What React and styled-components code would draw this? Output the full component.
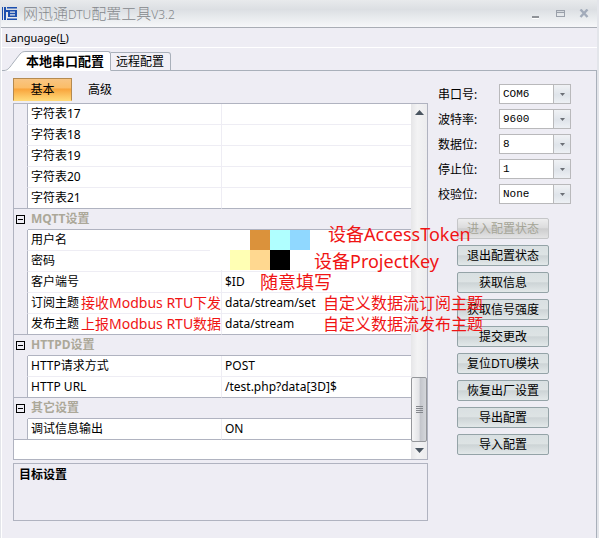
import { useState } from "react";
import styled, { createGlobalStyle } from "styled-components";

const GlobalStyle = createGlobalStyle`
  * {
    box-sizing: border-box;
  }

  body {
    margin: 0;
    background: #eeedf4;
    color: #000;
    font-family: "Noto Sans", "Noto Sans CJK SC", sans-serif;
    font-size: 12px;
    line-height: 20px;
  }

  button, select {
    font-family: inherit;
    font-size: inherit;
    color: inherit;
  }
`;

const Window = styled.div`
  display: flex;
  flex-direction: column;
  min-height: 100vh;
  padding: 0 2px 0 1px;
  background: #e3e5ea;
`;

const TitleBar = styled.header`
  display: flex;
  align-items: center;
  height: 28px;
  padding: 0 1px;
  background: linear-gradient(#e8eaec 0%, #dcdfe3 35%, #e6e9ec 60%, #f6f7f9 100%);
  border-bottom: 1px solid #a9adb5;
`;

const Title = styled.h1`
  flex: 1;
  margin: 0 0 0 5px;
  font-size: 15px;
  font-weight: 300;
  line-height: 26px;
  color: #85888c;
`;

const TitleLatin = styled.span`
  font-size: 12px;
`;

const CaptionButton = styled.button`
  display: flex;
  align-items: center;
  justify-content: center;
  width: 24px;
  height: 24px;
  padding: 0;
  border: none;
  background: none;
`;

const MenuBar = styled.nav`
  height: 20px;
  padding: 0 3px;
  background: #eeedf4;
  border-left: 1px solid #fff;
  border-bottom: 1px solid #fff;
`;

const MenuLink = styled.a`
  color: #000;
  text-decoration: none;
  font-size: 11px;
`;

const TabBar = styled.div`
  display: flex;
  align-items: flex-end;
  height: 23px;
  background: #eeedf4;
  border-left: 1px solid #fff;
`;

const TabSlope = styled.svg`
  flex: none;
  display: block;
`;

const Tab = styled.button`
  height: ${({ $active }) => ($active ? "20px" : "19px")};
  padding: ${({ $active }) => ($active ? "0 6px 0 0" : "0 6px 0 5px")};
  border: 1px solid #a9b0ba;
  border-left: none;
  border-bottom-color: ${({ $active }) => ($active ? "#fff" : "#a9b0ba")};
  border-radius: 0 3px 0 0;
  background: ${({ $active }) => ($active ? "#fff" : "#f1f0f6")};
  font-size: ${({ $active }) => ($active ? "13px" : "12px")};
  font-weight: ${({ $active }) => ($active ? "bold" : "normal")};
  line-height: 16px;
`;

const TabRule = styled.div`
  flex: 1;
  height: 1px;
  background: #a9b0ba;
`;

const Panel = styled.main`
  flex: 1;
  display: flex;
  align-items: flex-start;
  padding: 7px 0 0 11px;
  background: #eeedf4;
  border-left: 1px solid #fff;
  border-right: 1px solid #a9b0ba;
`;

const LeftColumn = styled.div`
  flex: 1;
  min-width: 0;
`;

const ModeRow = styled.div`
  display: flex;
  height: 25px;
`;

const ModeButton = styled.button`
  width: ${({ $active }) => ($active ? "59px" : "56px")};
  height: 23px;
  padding: 0;
  border: 1px solid ${({ $active }) => ($active ? "#b58a50" : "transparent")};
  border-bottom-color: ${({ $active }) => ($active ? "#ffd877" : "transparent")};
  background: ${({ $active }) =>
    $active ? "linear-gradient(#f8c583 0%, #fbbd68 42%, #f9a43c 48%, #ffd877 100%)" : "none"};
  line-height: 20px;
`;

const GridBox = styled.div`
  display: flex;
  border: 1px solid #b0b3c0;
  background: #fff;
`;

const GridBody = styled.div`
  flex: 1;
  min-width: 0;
  padding-bottom: 19px;
`;

const Table = styled.table`
  width: 100%;
  table-layout: fixed;
  border-collapse: separate;
  border-spacing: 0;
`;

const GutterCol = styled.col`
  width: 14px;
`;

const NameCol = styled.col`
  width: 194px;
`;

const Gutter = styled.td`
  height: 21px;
  padding: 0;
  background: #eeedf4;
  border-right: 1px solid ${({ $header }) => ($header ? "#eeedf4" : "#b0b3c0")};
  border-bottom: 1px solid ${({ $last }) => ($last ? "#b0b3c0" : "#eeedf4")};
`;

const SectionTitle = styled.th`
  height: 21px;
  padding: 0 3px;
  background: #eeedf4;
  border-bottom: 1px solid #b0b3c0;
  color: #aca899;
  text-align: left;
  line-height: 20px;
`;

const Cell = styled.td`
  position: relative;
  height: 21px;
  padding: 0 3px;
  border-bottom: 1px solid ${({ $last }) => ($last ? "#b0b3c0" : "#eeedf4")};
  line-height: 20px;
  white-space: nowrap;
`;

const NameCell = styled(Cell)`
  border-right: 1px solid #eeedf4;
`;

const Toggle = styled.button`
  display: block;
  width: 9px;
  height: 9px;
  margin-left: 2px;
  padding: 0;
  border: none;
  background: none;
`;

// Red remarks lie over the grid and may run out across the buttons.
const Note = styled.span`
  position: absolute;
  z-index: 2;
  top: ${({ $top = 0 }) => $top}px;
  left: ${({ $left }) => $left}px;
  color: #f01414;
  font-size: ${({ $size }) => $size}px;
  line-height: 20px;
  white-space: nowrap;
`;

const Mosaic = styled.span`
  position: absolute;
  z-index: 1;
  top: 0;
  left: -12px;
  display: grid;
  grid-template-columns: repeat(6, 20px);
  grid-auto-rows: 20px;
`;

const MosaicTile = styled.span`
  background: ${({ $color }) => $color};
`;

const ScrollBar = styled.div`
  display: flex;
  flex-direction: column;
  width: 16px;
  background: linear-gradient(90deg, #e6e6e8, #f3f3f4 40%, #ececee);
`;

const ScrollButton = styled.button`
  display: flex;
  align-items: center;
  justify-content: center;
  height: 17px;
  padding: 0;
  border: none;
  background: none;
`;

const ScrollThumb = styled.div`
  display: flex;
  align-items: center;
  justify-content: center;
  height: 65px;
  margin-top: auto;
  border: 1px solid #95979b;
  border-radius: 2px;
  background: linear-gradient(90deg, #f6f6f7, #e3e4e7 50%, #c4c6cc 60%, #d4d6da);
`;

const Description = styled.section`
  height: 58px;
  margin-top: 3px;
  padding: 1px 5px;
  border: 1px solid #b0b3c0;
  font-weight: bold;
`;

const RightColumn = styled.div`
  width: 168px;
  padding: 6px 0 0 10px;
`;

const Fields = styled.div`
  display: flex;
  flex-direction: column;
  gap: 5px;
`;

const Field = styled.div`
  display: grid;
  grid-template-columns: 61px 72px;
`;

const FieldLabel = styled.label`
  line-height: 22px;
  height: 20px;
`;

const SelectBox = styled.span`
  position: relative;
  display: block;
  height: 20px;
`;

const Select = styled.select`
  appearance: none;
  display: block;
  width: 100%;
  height: 20px;
  padding: 0 18px 0 3px;
  border: 1px solid #b9b9bb;
  border-radius: 0;
  background: #fff;
  font-family: "Liberation Mono", monospace;
  font-size: 11px;
`;

const SelectArrow = styled.span`
  position: absolute;
  top: 1px;
  right: 1px;
  bottom: 1px;
  display: flex;
  align-items: center;
  justify-content: center;
  width: 17px;
  border-left: 1px solid #b9b9bb;
  background: linear-gradient(#f0f2f5, #dfe4ea 55%, #edf0f4);
  pointer-events: none;
`;

const Actions = styled.div`
  display: flex;
  flex-direction: column;
  gap: 6px;
  margin: 14px 0 0 19px;
`;

const ActionButton = styled.button`
  width: 92px;
  height: 21px;
  padding: 0;
  border: 1px solid #94a3a7;
  border-radius: 2px;
  background: linear-gradient(#d9e0e2 0%, #dde3e4 45%, #cdd4d6 52%, #e2e8e9 100%);
  line-height: 18px;

  &:disabled {
    border-color: #c5c6c8;
    background: linear-gradient(#ededee 0%, #dcdcdd 45%, #cdcdce 52%, #e3e3e4 100%);
    color: #a5a597;
  }
`;

const mosaicColors = [
  "#fff", "#fff", "#db923b", "#b0ffff", "#90d8ff", "#fff",
  "#fff", "#ffffb4", "#ffd890", "#000", "#fff", "#fff",
];

const sections = [
  {
    rows: [
      { name: "字符表17" },
      { name: "字符表18" },
      { name: "字符表19" },
      { name: "字符表20" },
      { name: "字符表21" },
    ],
  },
  {
    title: "MQTT设置",
    rows: [
      { name: "用户名", mosaic: true, note: { text: "设备AccessToken", left: 106, top: -6, size: 18 } },
      { name: "密码", note: { text: "设备ProjectKey", left: 92, size: 18 } },
      { name: "客户端号", value: "$ID", note: { text: "随意填写", left: 38, size: 18 } },
      {
        name: "订阅主题",
        value: "data/stream/set",
        nameNote: "接收Modbus RTU下发",
        note: { text: "自定义数据流订阅主题", left: 101, size: 16 },
      },
      {
        name: "发布主题",
        value: "data/stream",
        nameNote: "上报Modbus RTU数据",
        note: { text: "自定义数据流发布主题", left: 101, size: 16 },
      },
    ],
  },
  {
    title: "HTTPD设置",
    rows: [
      { name: "HTTP请求方式", value: "POST" },
      { name: "HTTP URL", value: "/test.php?data[3D]$" },
    ],
  },
  {
    title: "其它设置",
    rows: [{ name: "调试信息输出", value: "ON" }],
  },
];

const fields = [
  { id: "port", label: "串口号:", options: ["COM6", "COM1"] },
  { id: "baud", label: "波特率:", options: ["9600", "115200"] },
  { id: "data", label: "数据位:", options: ["8", "7"] },
  { id: "stop", label: "停止位:", options: ["1", "2"] },
  { id: "parity", label: "校验位:", options: ["None", "Odd", "Even"] },
];

const actions = [
  "进入配置状态",
  "退出配置状态",
  "获取信息",
  "获取信号强度",
  "提交更改",
  "复位DTU模块",
  "恢复出厂设置",
  "导出配置",
  "导入配置",
];

const Logo = () => (
  <svg width="16" height="14" viewBox="0 0 16 14" fill="#1c4fae" aria-hidden="true">
    <path d="M0 0h1v13H0zM2 0h2v13H2zM5 0h10v1.500H5z" />
    <path d="M4 3h11v7H6V5H4zM8 4.500v1.200h5V4.500zM8 7.300v1.200h5V7.300z" fillRule="evenodd" />
    <path d="M5 11.500h10V13H5z" />
  </svg>
);

const Arrow = ({ up, width = 5, color = "#6b6f76" }) => (
  <svg width={width} height={(width + 1) / 2} viewBox="0 0 10 5" preserveAspectRatio="none" fill={color} aria-hidden="true">
    <path d={up ? "M0 5h10L5 0z" : "M0 0h10L5 5z"} />
  </svg>
);

const TitleButtons = () => (
  <>
    <CaptionButton aria-label="Minimize">
      <svg width="8" height="10" viewBox="0 0 8 10">
        <path d="M0 7h7v2H0z" fill="#8f9298" />
        <path d="M0 9h7v1H0z" fill="#fff" />
      </svg>
    </CaptionButton>
    <CaptionButton aria-label="Maximize">
      <svg width="9" height="8" viewBox="0 0 9 8">
        <path d="M0 0h9v7H0zM1 3v3h7V3z" fill="#9aa0aa" fillRule="evenodd" />
        <path d="M1 1h7v1H1z" fill="#d4d8dd" />
      </svg>
    </CaptionButton>
    <CaptionButton aria-label="Close">
      <svg width="10" height="9" viewBox="0 0 10 9">
        <path d="M1.500 0.500l7 7.500M8.500 0.500l-7 7.500" stroke="#a2abba" strokeWidth="2.400" />
      </svg>
    </CaptionButton>
  </>
);

const ToggleIcon = ({ open }) => (
  <svg width="9" height="9" viewBox="0 0 9 9" display="block" aria-hidden="true">
    <path d="M0 0h9v9H0zM1 1v7h7V1z" fillRule="evenodd" />
    <path d="M2 4h5v1H2z" />
    {!open && <path d="M4 2h1v5H4z" />}
  </svg>
);

const GridSection = ({ section }) => {
  const [open, setOpen] = useState(true);
  const lastRow = section.rows.length - 1;

  return (
    <tbody>
      {section.title && (
        <tr>
          <Gutter $header>
            <Toggle aria-label={section.title} aria-expanded={open} onClick={() => setOpen(!open)}>
              <ToggleIcon open={open} />
            </Toggle>
          </Gutter>
          <SectionTitle colSpan={2} scope="rowgroup">{section.title}</SectionTitle>
        </tr>
      )}
      {open && section.rows.map((row, index) => (
        <tr key={row.name}>
          <Gutter $last={index === lastRow} />
          <NameCell $last={index === lastRow}>
            {row.name}
            {row.nameNote && <Note $left={53} $size={14}>{row.nameNote}</Note>}
          </NameCell>
          <Cell $last={index === lastRow}>
            {row.value}
            {row.mosaic && (
              <Mosaic aria-hidden="true">
                {mosaicColors.map((color, i) => <MosaicTile key={i} $color={color} />)}
              </Mosaic>
            )}
            {row.note && (
              <Note $left={row.note.left} $top={row.note.top} $size={row.note.size}>{row.note.text}</Note>
            )}
          </Cell>
        </tr>
      ))}
    </tbody>
  );
};

const PropertyGrid = () => (
  <GridBox>
    <GridBody>
      <Table>
        <colgroup>
          <GutterCol />
          <NameCol />
          <col />
        </colgroup>
        {sections.map((section, index) => <GridSection key={index} section={section} />)}
      </Table>
    </GridBody>
    <ScrollBar>
      <ScrollButton aria-label="Scroll up"><Arrow up width={9} color="#4a5560" /></ScrollButton>
      <ScrollThumb>
        <svg width="7" height="7" viewBox="0 0 7 7" aria-hidden="true">
          <path d="M0 0h7v1H0zM0 2h7v1H0zM0 4h7v1H0zM0 6h7v1H0z" fill="#85888d" />
        </svg>
      </ScrollThumb>
      <ScrollButton aria-label="Scroll down"><Arrow width={9} color="#4a5560" /></ScrollButton>
    </ScrollBar>
  </GridBox>
);

const PortSettings = () => (
  <Fields>
    {fields.map(({ id, label, options }) => (
      <Field key={id}>
        <FieldLabel htmlFor={id}>{label}</FieldLabel>
        <SelectBox>
          <Select id={id} defaultValue={options[0]}>
            {options.map((option) => <option key={option}>{option}</option>)}
          </Select>
          <SelectArrow><Arrow /></SelectArrow>
        </SelectBox>
      </Field>
    ))}
  </Fields>
);

export default function App() {
  return (
    <>
      <GlobalStyle />
      <Window>
        <TitleBar>
          <Logo />
          <Title>
            网迅通<TitleLatin>DTU</TitleLatin>配置工具<TitleLatin>V3.2</TitleLatin>
          </Title>
          <TitleButtons />
        </TitleBar>
        <MenuBar>
          <MenuLink href="#language">Language(<u>L</u>)</MenuLink>
        </MenuBar>
        <TabBar>
          <TabSlope width="24" height="20" viewBox="0 0 24 20" aria-hidden="true">
            <path d="M0 19.500H2C6 19.500 8 16 11 12L18 3C20 1 21 0.500 24 0.500V20H2z" fill="#fff" />
            <path d="M0 19.500H2C6 19.500 8 16 11 12L18 3C20 1 21 0.500 24 0.500" fill="none" stroke="#a9b0ba" />
          </TabSlope>
          <Tab $active>本地串口配置</Tab>
          <Tab>远程配置</Tab>
          <TabRule />
        </TabBar>
        <Panel>
          <LeftColumn>
            <ModeRow>
              <ModeButton $active>基本</ModeButton>
              <ModeButton>高级</ModeButton>
            </ModeRow>
            <PropertyGrid />
            <Description>目标设置</Description>
          </LeftColumn>
          <RightColumn>
            <PortSettings />
            <Actions>
              {actions.map((action, index) => (
                <ActionButton key={action} disabled={index === 0}>{action}</ActionButton>
              ))}
            </Actions>
          </RightColumn>
        </Panel>
      </Window>
    </>
  );
}
